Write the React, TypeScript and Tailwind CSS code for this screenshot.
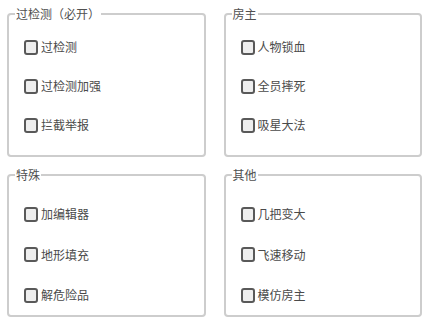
import React from "react";

type Group = { title: string; items: string[]; top: boolean };

const groups: Group[] = [
  { title: "过检测（必开）", items: ["过检测", "过检测加强", "拦截举报"], top: true },
  { title: "房主", items: ["人物锁血", "全员摔死", "吸星大法"], top: true },
  { title: "特殊", items: ["加编辑器", "地形填充", "解危险品"], top: false },
  { title: "其他", items: ["几把变大", "飞速移动", "模仿房主"], top: false },
];

function Box({ g }: { g: Group }) {
  return (
    <fieldset
      className={
        "border-2 border-[#cdcdcd] rounded-[4px] pl-[6px] pr-[6px] " +
        (g.top ? "h-[151px]" : "h-[150px]")
      }
    >
      <legend className="px-[1px] text-[12px] leading-[16px] text-[#505050]">{g.title}</legend>
      <div
        className={
          "flex flex-col pl-[9px] " + (g.top ? "pt-[17px] gap-[23px]" : "pt-[23px] gap-[24.5px]")
        }
      >
        {g.items.map((it) => (
          <label key={it} className="flex items-center gap-[3px] h-[16px] text-[12px] leading-[16px] text-[#4a4a4a]">
            <input
              type="checkbox"
              className="appearance-none m-0 w-[14px] h-[15px] border-2 border-[#595959] rounded-[3px] bg-[#eeeeee]"
            />
            <span>{it}</span>
          </label>
        ))}
      </div>
    </fieldset>
  );
}

export default function App() {
  return (
    <div
      className="w-[429px] h-[327px] bg-white px-[7px] pt-[6px] grid grid-cols-2 gap-x-[18px] gap-y-[10px] content-start"
      style={{ fontFamily: '"Noto Sans CJK SC", "Noto Sans", sans-serif' }}
    >
      {groups.map((g) => (
        <Box key={g.title} g={g} />
      ))}
    </div>
  );
}
